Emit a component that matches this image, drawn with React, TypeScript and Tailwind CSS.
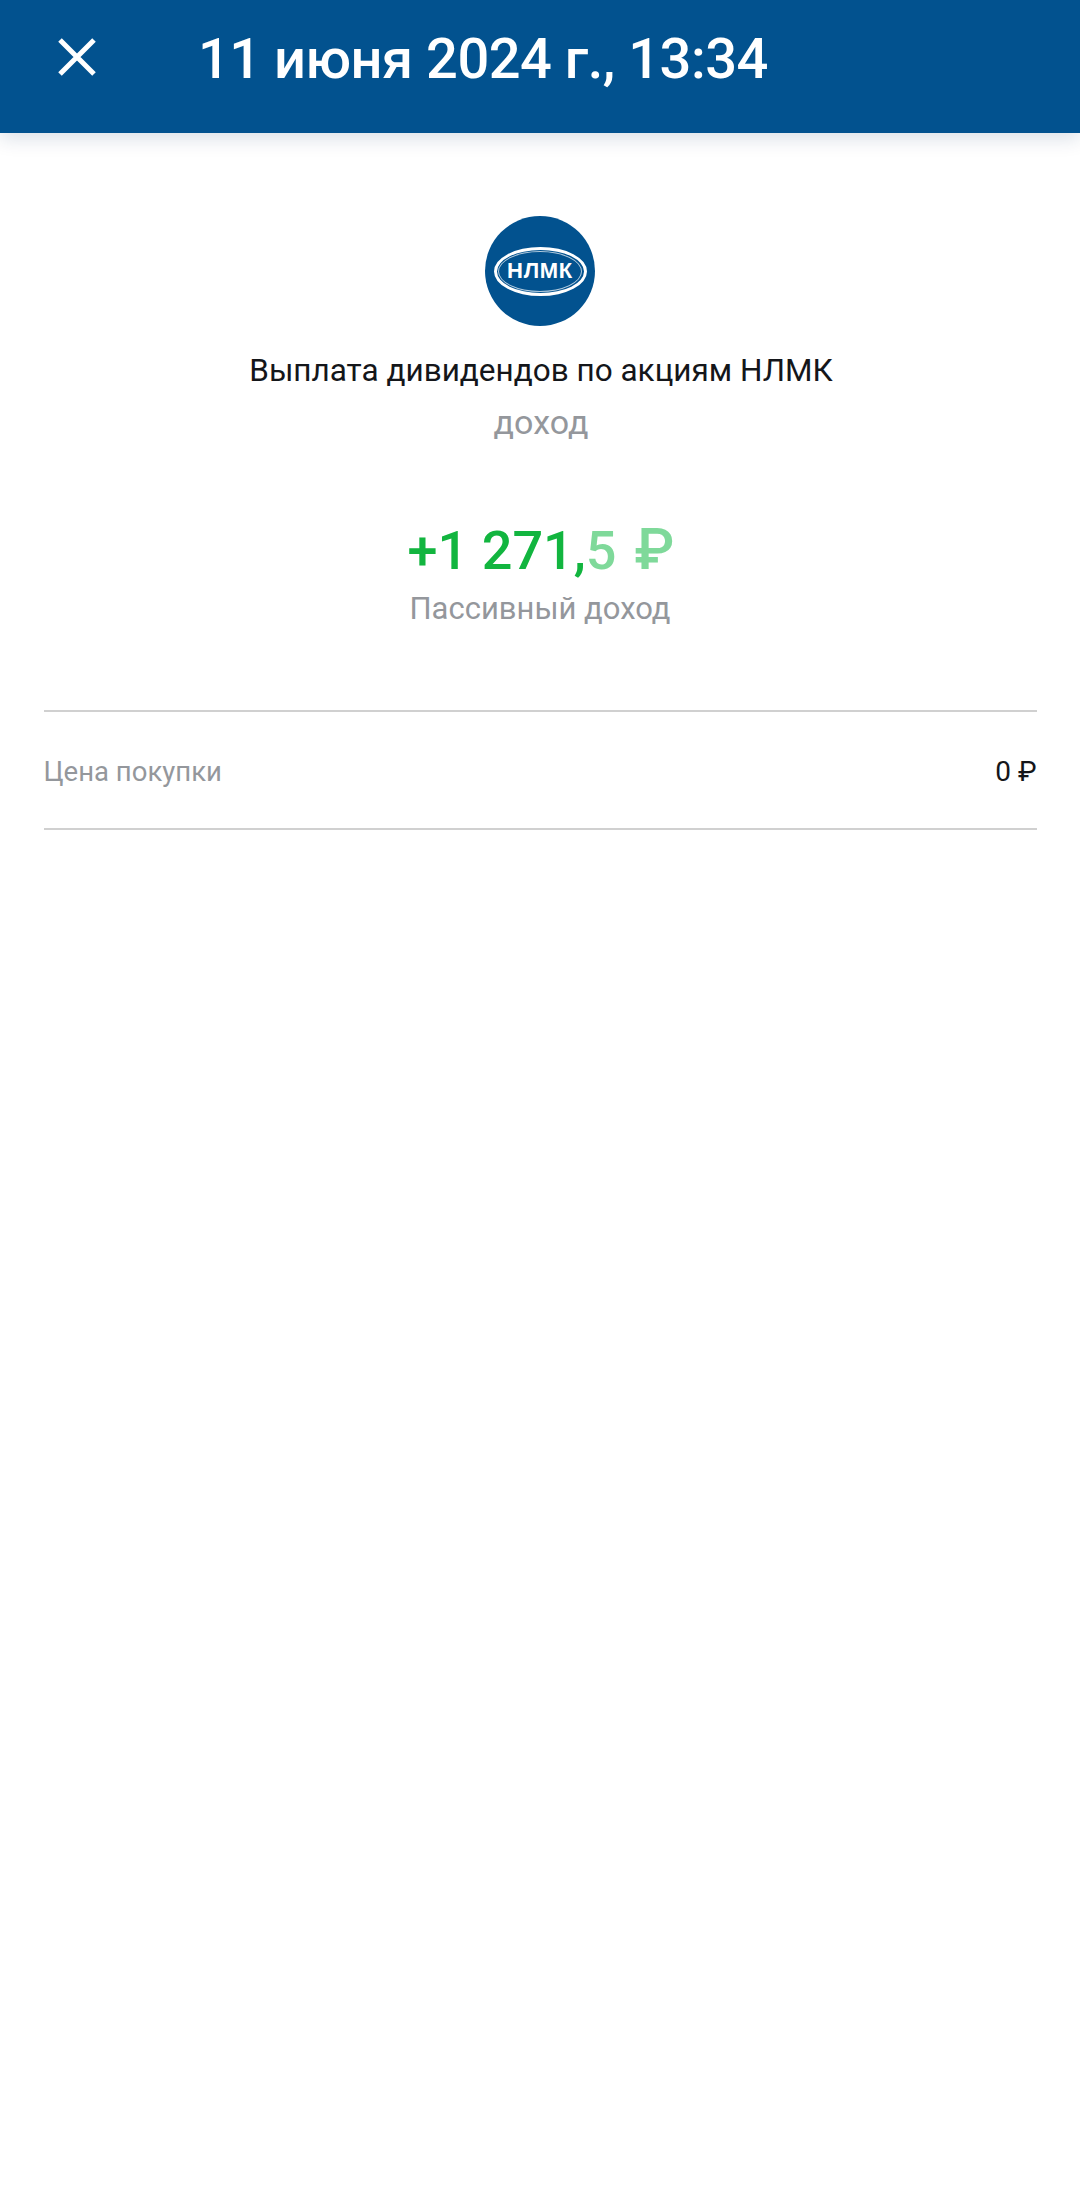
import React from "react";

function NlmkLogo() {
  return (
    <div className="relative w-[110px] h-[110px] rounded-full bg-[#02528f] flex items-center justify-center">
      <div className="absolute w-[93px] h-[49px] rounded-[50%] border-[3px] border-white" />
      <div className="absolute w-[84px] h-[41px] rounded-[50%] border border-white/70" />
      <span className="relative text-white font-bold text-[22px] tracking-[0.7px] leading-none font-['Liberation_Sans',sans-serif]">
        НЛМК
      </span>
    </div>
  );
}

export default function App() {
  return (
    <div className="w-[1080px] h-[2200px] bg-white font-['Roboto',sans-serif]">
      <header className="h-[133px] bg-[#02528f] flex items-center shadow-[0_6px_18px_rgba(0,40,90,0.14)] relative">
        <button className="w-[38px] h-[38px] ml-[58px] mb-[20px] text-white">
          <svg viewBox="0 0 38 38" className="w-[38px] h-[38px]" fill="none" stroke="currentColor" strokeWidth="5">
            <path d="M2 2 L36 36 M36 2 L2 36" />
          </svg>
        </button>
        <h1 className="ml-[102px] mb-[16px] text-white font-medium text-[56px] tracking-[-0.5px] leading-none">
          11 июня 2024 г., 13:34
        </h1>
      </header>

      <main className="flex flex-col items-center pt-[83px]">
        <NlmkLogo />
        <div className="mt-[27px] ml-[2px] text-[31.5px] leading-[36px] text-[#14161a]">Выплата дивидендов по акциям НЛМК</div>
        <div className="mt-[15px] ml-[2px] text-[34px] leading-[36px] text-[#94979c]">доход</div>
        <div className="mt-[79px] ml-[2px] text-[54px] leading-[64px] font-medium text-[#12b53f]">
          +1 271,<span className="text-[#7fd99a]">5<span className="ml-[18px] text-[58px] leading-none">₽</span></span>
        </div>
        <div className="mt-[8px] text-[31px] leading-[36px] text-[#94979c]">Пассивный доход</div>

        <div className="mt-[83px] w-[993px] pt-[4px] border-y-2 border-[#d0d0d0] h-[120px] flex items-center justify-between text-[27.5px]">
          <span className="text-[#94979c]">Цена покупки</span>
          <span className="text-[28px] text-[#14161a]">0 ₽</span>
        </div>
      </main>
    </div>
  );
}
